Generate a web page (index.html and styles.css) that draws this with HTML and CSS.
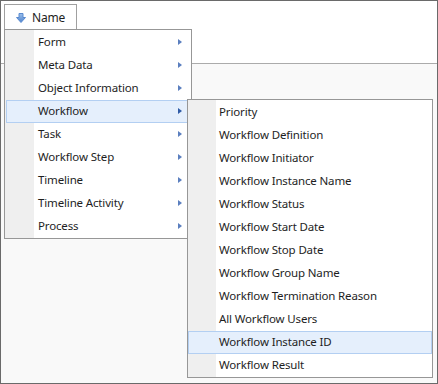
FILE: index.html
```html
<!DOCTYPE html>
<html lang="en">

<head>
    <meta charset="UTF-8">
    <title>Columns</title>
    <link rel="stylesheet" href="styles.css">
</head>

<body>
    <div class="frame">
        <div class="header">
            <div class="tab">
                <svg class="sort_icon" width="10" height="10" viewBox="0 0 10 10">
                    <defs>
                        <linearGradient id="arrowFill" x1="0" y1="0" x2="0" y2="1">
                            <stop offset="0" stop-color="#9cc0ec" />
                            <stop offset="1" stop-color="#4f83cc" />
                        </linearGradient>
                    </defs>
                    <path d="M3 0.5H7V4.5H9.5L5 9.5L0.5 4.5H3Z" fill="url(#arrowFill)" stroke="#5b8bd0" stroke-width="1" stroke-linejoin="round" />
                </svg>
                <span>Name</span>
            </div>
        </div>
        <div class="body_area"></div>

        <ul class="menu main_menu">
            <li class="has_sub">Form</li>
            <li class="has_sub">Meta Data</li>
            <li class="has_sub">Object Information</li>
            <li class="has_sub on">Workflow
                <ul class="menu sub_menu">
                    <li>Priority</li>
                    <li>Workflow Definition</li>
                    <li>Workflow Initiator</li>
                    <li>Workflow Instance Name</li>
                    <li>Workflow Status</li>
                    <li>Workflow Start Date</li>
                    <li>Workflow Stop Date</li>
                    <li>Workflow Group Name</li>
                    <li>Workflow Termination Reason</li>
                    <li>All Workflow Users</li>
                    <li class="on">Workflow Instance ID</li>
                    <li>Workflow Result</li>
                </ul>
            </li>
            <li class="has_sub">Task</li>
            <li class="has_sub">Workflow Step</li>
            <li class="has_sub">Timeline</li>
            <li class="has_sub">Timeline Activity</li>
            <li class="has_sub">Process</li>
        </ul>
    </div>
</body>

</html>
```

FILE: styles.css
```css
* {
    padding: 0;
    margin: 0;
    box-sizing: border-box;
}

ul,
li {
    list-style: none;
}

body {
    font-family: "Noto Sans", "Open Sans", sans-serif;
    font-size: 11.5px;
    letter-spacing: -0.15px;
    color: #1e1e1e;
}

.frame {
    position: relative;
    width: 438px;
    height: 384px;
    border: 1px solid #6a6a6a;
    display: flex;
    flex-direction: column;
    background: #f9f9f9;
}

.header {
    height: 63px;
    background: #fff;
    border-bottom: 1px solid #ababab;
    padding: 3px 0 0 3px;
}

.tab {
    width: 73px;
    height: 30px;
    border: 1px solid #a0a0a0;
    border-bottom: none;
    display: flex;
    align-items: center;
    padding: 0 0 4px 11px;
    gap: 6px;
}

.tab span {
    font-size: 12px;
}

.sort_icon {
    flex: none;
}

.body_area {
    flex: 1;
}

.menu {
    position: absolute;
    background: #fff linear-gradient(to right, #efefef 0, #efefef 29px, #fff 29px);
    border: 1px solid #979797;
    padding-top: 1px;
}

.main_menu {
    left: 3px;
    top: 28px;
    width: 188px;
}

.menu > li {
    position: relative;
    height: 23px;
    line-height: 20px;
    margin: 0 1px;
    padding-left: 31px;
    border: 1px solid transparent;
    white-space: nowrap;
}

.menu > li.on {
    background: #e5effc;
    border-color: #b3cff2;
}

.has_sub::after {
    content: '';
    position: absolute;
    right: 7px;
    top: 7px;
    border-left: 4px solid #5b7fbf;
    border-top: 3.5px solid transparent;
    border-bottom: 3.5px solid transparent;
}

.has_sub.on::after {
    border-left-color: #2f5ba6;
}

.sub_menu {
    left: 180px;
    top: -2px;
    width: 246px;
    background: #fff linear-gradient(to right, #efefef 0, #efefef 28px, #fff 28px);
}

.sub_menu > li {
    margin: 0;
    padding-left: 30px;
}
```
